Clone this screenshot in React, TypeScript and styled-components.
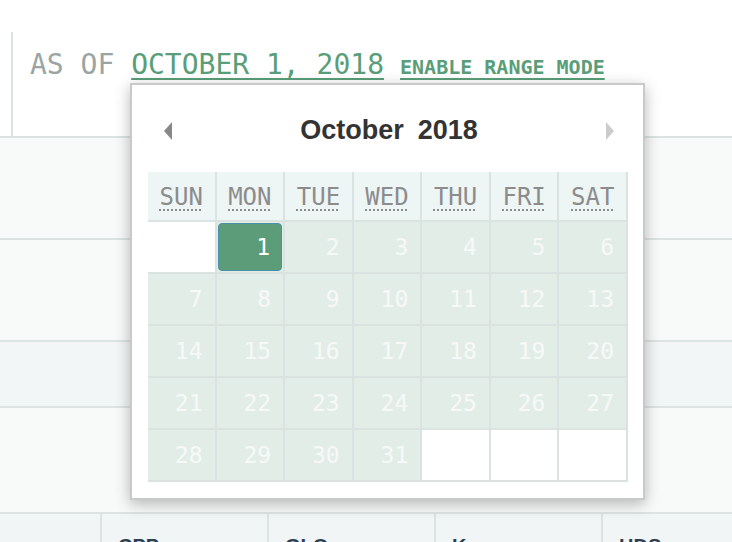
import React from "react";
import styled, { createGlobalStyle } from "styled-components";

const GlobalStyle = createGlobalStyle`
  html, body {
    margin: 0;
    padding: 0;
    background: #ffffff;
    overflow: hidden;
  }
`;

const MONO = `"DejaVu Sans Mono", "Liberation Mono", monospace`;
const SANS = `"Liberation Sans", Arial, sans-serif`;

const weekDays = [
  { short: "SUN", full: "Sunday" },
  { short: "MON", full: "Monday" },
  { short: "TUE", full: "Tuesday" },
  { short: "WED", full: "Wednesday" },
  { short: "THU", full: "Thursday" },
  { short: "FRI", full: "Friday" },
  { short: "SAT", full: "Saturday" },
];

// october 2018 starts on a monday
const FIRST_OFFSET = 1;
const DAYS_IN_MONTH = 31;
const SELECTED = 1;

const cells: (number | null)[] = [];
for (let i = 0; i < 35; i++) {
  const d = i - FIRST_OFFSET + 1;
  cells.push(d >= 1 && d <= DAYS_IN_MONTH ? d : null);
}

const rows = [
  { height: 100, bg: "#f8fafa" },
  { height: 100, bg: "#f8fafa" },
  { height: 64, bg: "#f3f6f7" },
  { height: 104, bg: "#f8fafa" },
];

const columns = ["", "CPP", "GLO", "Kyo", "HDS"];

const Arrow: React.FC<{ dir: "left" | "right"; color: string }> = ({ dir, color }) => (
  <svg width="12" height="20" viewBox="0 0 12 20">
    {dir === "left" ? (
      <polygon points="10,1 2,10 10,19" fill={color} />
    ) : (
      <polygon points="2,1 10,10 2,19" fill={color} />
    )}
  </svg>
);

const App: React.FC = () => {
  return (
    <Page>
      <GlobalStyle />
      <Header>
        <FilterBlock>
          <AsOf>
            AS OF <DateLink>OCTOBER 1, 2018</DateLink>
          </AsOf>
          <RangeLink>ENABLE RANGE MODE</RangeLink>
        </FilterBlock>
      </Header>

      {rows.map((r, idx) => (
        <Row key={idx} h={r.height} bg={r.bg} />
      ))}

      <ColumnRow>
        {columns.map((c, idx) => (
          <ColumnCell key={idx} first={idx === 0}>
            {c}
          </ColumnCell>
        ))}
      </ColumnRow>

      <Popup>
        <PopupHeader>
          <NavButton>
            <Arrow dir="left" color="#888888" />
          </NavButton>
          <Title>
            October<Year>2018</Year>
          </Title>
          <NavButton>
            <Arrow dir="right" color="#cccccc" />
          </NavButton>
        </PopupHeader>
        <Grid>
          {weekDays.map((w) => (
            <WeekDay key={w.short}>
              <abbr title={w.full}>{w.short}</abbr>
            </WeekDay>
          ))}
          {cells.map((d, idx) =>
            d === null ? (
              <EmptyCell key={idx} />
            ) : (
              <DayCell key={idx}>
                {d === SELECTED ? <Selected>{d}</Selected> : d}
              </DayCell>
            )
          )}
        </Grid>
      </Popup>
    </Page>
  );
};

export default App;

const Page = styled.div`
  position: relative;
  width: 732px;
  height: 542px;
  overflow: hidden;
  background: #ffffff;
`;

const Header = styled.div`
  height: 138px;
  box-sizing: border-box;
  padding-top: 32px;
  padding-left: 11px;
  border-bottom: 2px solid #dce4e3;
  display: flex;
`;

const FilterBlock = styled.div`
  border-left: 2px solid #dce4e3;
  padding: 16px 0 0 17px;
  display: flex;
  align-items: baseline;
  gap: 16px;
  height: 106px;
  box-sizing: border-box;
`;

const AsOf = styled.div`
  font-family: ${MONO};
  font-size: 28px;
  line-height: 34px;
  color: #9aa5a3;
  white-space: pre;
`;

const DateLink = styled.span`
  color: #5a9e79;
  text-decoration: underline;
  text-decoration-thickness: 2px;
  text-underline-offset: 4px;
`;

const RangeLink = styled.span`
  font-family: ${MONO};
  font-size: 20px;
  font-weight: bold;
  color: #5a9e79;
  text-decoration: underline;
  text-decoration-thickness: 2px;
  text-underline-offset: 4px;
`;

const Row = styled.div<{ h: number; bg: string }>`
  height: ${(p) => p.h}px;
  background: ${(p) => p.bg};
  border-bottom: 2px solid #dce4e3;
`;

const ColumnRow = styled.div`
  display: grid;
  grid-template-columns: 100px repeat(4, 167px);
  background: #f1f5f6;
  height: 60px;
`;

const ColumnCell = styled.div<{ first: boolean }>`
  border-left: ${(p) => (p.first ? "none" : "2px solid #dce4e3")};
  padding: 21px 0 0 16px;
  font-family: ${SANS};
  font-size: 20px;
  font-weight: bold;
  color: #2c3e50;
`;

const Popup = styled.div`
  position: absolute;
  left: 130px;
  top: 83px;
  width: 515px;
  height: 417px;
  box-sizing: border-box;
  background: #ffffff;
  border: 2px solid #c9c9c9;
  box-shadow: 0 4px 14px rgba(0, 0, 0, 0.28);
  padding: 0 15px 15px 16px;
  display: flex;
  flex-direction: column;
`;

const PopupHeader = styled.div`
  height: 87px;
  display: flex;
  align-items: center;
  justify-content: space-between;
  padding: 0 12px 0 14px;
`;

const NavButton = styled.div`
  display: flex;
  align-items: center;
  padding-top: 4px;
`;

const Title = styled.div`
  font-family: ${SANS};
  font-size: 27px;
  font-weight: bold;
  color: #333333;
  padding-top: 4px;
`;

const Year = styled.span`
  margin-left: 14px;
`;

const Grid = styled.div`
  display: grid;
  grid-template-columns: repeat(7, 1fr);
  grid-template-rows: 48px repeat(5, 50px);
  gap: 2px;
  padding: 0 2px 2px 0;
  background: #dae3e1;
`;

const WeekDay = styled.div`
  background: #eef5f5;
  display: flex;
  align-items: center;
  justify-content: center;
  font-family: ${MONO};
  font-size: 24px;
  color: #8c8c8c;
  padding-top: 2px;

  abbr {
    text-decoration: underline dotted;
    text-decoration-thickness: 2px;
    text-underline-offset: 4px;
  }
`;

const EmptyCell = styled.div`
  background: #ffffff;
`;

const DayCell = styled.div`
  background: #e3ede8;
  display: flex;
  align-items: center;
  justify-content: flex-end;
  padding-right: 12px;
  font-family: ${MONO};
  font-size: 23px;
  color: #f6f9f7;
  position: relative;
`;

const Selected = styled.div`
  position: absolute;
  inset: 1px;
  background: #5c9c78;
  border: 1px solid #4a8fa8;
  border-radius: 4px;
  display: flex;
  align-items: center;
  justify-content: flex-end;
  padding-right: 11px;
  color: #ffffff;
`;
